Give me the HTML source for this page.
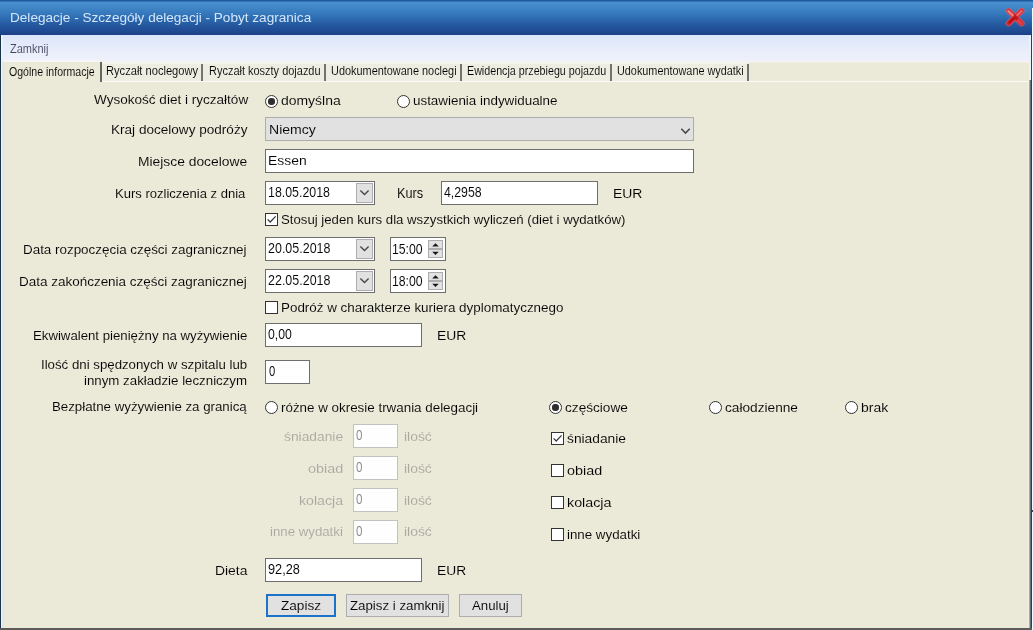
<!DOCTYPE html>
<html><head><meta charset="utf-8"><title>Delegacje</title>
<style>
html,body{margin:0;padding:0;}
body{width:1033px;height:630px;overflow:hidden;background:#ece9d8;font-family:"Liberation Sans",sans-serif;}
#win{position:relative;width:1033px;height:630px;overflow:hidden;background:#ebe9d8;}
.t{position:absolute;white-space:pre;line-height:20px;height:20px;transform-origin:0 0;font-family:"Liberation Sans",sans-serif;}
.a{position:absolute;box-sizing:border-box;}
#title{left:0;top:0;width:1033px;height:35px;background:linear-gradient(#1d5a9c 0px,#1f5c9f 1px,#4a90d1 2.2px,#3f86c6 8px,#3172b6 16px,#265ba2 24px,#1f4a91 31px,#1c4086 35px);}
#menu{left:2px;top:35px;width:1027px;height:25.5px;background:linear-gradient(#dce6fa,#e6ecfa 50%,#eff2fb);}
#tabs{left:102px;top:60.5px;width:646px;height:20.5px;background:linear-gradient(#f5f5f0 0px,#f3f3ec 2.5px,#eeede1 3.5px,#eeede1 100%);}
#tabs2{left:748px;top:60.5px;width:281px;height:2.5px;background:linear-gradient(#f3f4f2,#efeee4);}
.sep{position:absolute;top:64px;width:2px;height:17px;background:#737370;}
#tabline{left:102px;top:81px;width:927px;height:1px;background:#fbfbf7;}
#acttab{left:3px;top:60px;width:97px;height:2.3px;background:linear-gradient(#f3f5fa,#f8f8f4);}
.inp{background:#fff;border:1px solid #6e6e6e;}
.inpd{background:#fefefe;border:1px solid #c2c2be;}
.combo{background:#e1e1e1;border:1px solid #adadad;}
.dbtn{background:#e1e1e1;border:1px solid #adadad;}
.radio{width:13px;height:13px;border-radius:50%;border:1px solid #333;background:#fff;}
.radio.on::after{content:"";position:absolute;left:2.3px;top:2.3px;width:6.4px;height:6.4px;border-radius:50%;background:#2e2e2e;}
.cb{width:13px;height:13px;border:1px solid #333;background:#fff;}
.btn{background:#e1e1e1;border:1px solid #adadad;}
.btn.def{border:2px solid #1a72c9;}

</style></head>
<body>
<div id="win">
<div class="a" id="title"></div>
<div class="a" id="menu"></div>
<div class="a" id="tabs"></div>
<div class="a" id="tabs2"></div>
<div class="a" id="acttab"></div>
<div class="sep" style="left:100px;top:62px;height:20px;background:#666663"></div>
<div class="sep" style="left:201.3px"></div>
<div class="sep" style="left:324px"></div>
<div class="sep" style="left:460px"></div>
<div class="sep" style="left:610px"></div>
<div class="sep" style="left:747.2px"></div>
<div class="a" id="tabline"></div>
<!-- edges -->
<div class="a" style="left:0;top:35px;width:1px;height:595px;background:#1b3347"></div>
<div class="a" style="left:1px;top:35px;width:1px;height:595px;background:#ecf7ff"></div>
<div class="a" style="left:2px;top:35px;width:1px;height:27px;background:#e9effb"></div>
<div class="a" style="left:2px;top:62px;width:1px;height:568px;background:#dfe5e8"></div>
<div class="a" style="left:3px;top:62px;width:1px;height:566px;background:#e7e5db"></div>
<div class="a" style="left:1029px;top:35px;width:2px;height:45px;background:#eaf1fa"></div>
<div class="a" style="left:1027px;top:82px;width:2px;height:546px;background:#efecdc"></div>
<div class="a" style="left:1029px;top:80px;width:1px;height:550px;background:#a4acb0"></div>
<div class="a" style="left:1030px;top:80px;width:1px;height:550px;background:#5f6e7a"></div>
<div class="a" style="left:1031px;top:35px;width:1px;height:595px;background:#2e4050"></div>
<div class="a" style="left:1032px;top:8px;width:1px;height:622px;background:#f4fbff"></div>
<div class="a" style="left:0;top:628px;width:1032px;height:2px;background:#5c5c58"></div>
<div class="a" style="left:1032px;top:510px;width:1px;height:2px;background:#39424f"></div>
<!-- close X -->
<svg class="a" style="left:1001px;top:3px" width="28" height="28" viewBox="-2 -2 28 28">
<defs><filter id="bl" x="-20%" y="-20%" width="140%" height="140%"><feGaussianBlur stdDeviation="0.55"/></filter></defs>
<g fill="none" stroke-linecap="round" filter="url(#bl)">
<path d="M5.6 5.8 L18.6 18.4 M18.6 5.8 L5.6 18.4" stroke="#e0606a" stroke-width="6" opacity="0.75"/>
<path d="M5.6 5.8 L18.6 18.4 M18.6 5.8 L5.6 18.4" stroke="#d8272d" stroke-width="4.3"/>
<path d="M6.3 17.6 L11.5 12.6" stroke="#b80c14" stroke-width="2.2"/>
<path d="M10.8 11 L13.4 13.4" stroke="#c2141a" stroke-width="3"/>
<path d="M5.4 6.2 L9.8 10.4" stroke="#ef8d90" stroke-width="2.4" opacity="0.85"/>
<path d="M18.6 6.0 L14.4 10" stroke="#ea7a80" stroke-width="2.2" opacity="0.8"/>
<path d="M15 15.4 L18.4 18.6" stroke="#e24a50" stroke-width="2.4" opacity="0.8"/>
</g>
</svg>

<!-- row1 radios -->
<div class="a radio on" style="left:265px;top:95px"></div>
<div class="a radio" style="left:397px;top:95px"></div>
<!-- combo -->
<div class="a combo" style="left:265px;top:117px;width:429px;height:24px"></div>
<svg class="a chev" style="left:679.6px;top:126.6px" width="11" height="9" viewBox="0 0 11 9"><path d="M1.3 1.8 L5.5 6.1 L9.7 1.8" fill="none" stroke="#484848" stroke-width="1.55"/></svg>
<!-- miejsce -->
<div class="a inp" style="left:265px;top:149px;width:429px;height:24px"></div>
<!-- kurs date -->
<div class="a inp" style="left:265px;top:181px;width:110px;height:24px"></div>
<div class="a dbtn" style="left:356px;top:183px;width:17px;height:20px"></div>
<svg class="a chev" style="left:358.7px;top:189.2px" width="11" height="8" viewBox="0 0 11 8"><path d="M1.4 1.6 L5.5 5.6 L9.6 1.6" fill="none" stroke="#484848" stroke-width="1.35"/></svg>
<div class="a inp" style="left:441px;top:181px;width:157px;height:24px"></div>
<!-- cb stosuj -->
<div class="a cb" style="left:265px;top:213px"></div>
<svg class="a" style="left:266px;top:214px" width="11" height="11" viewBox="0 0 11 11"><path d="M1.6 5.4 L4.2 8 L9.6 2.4" fill="none" stroke="#3a3a3a" stroke-width="1.25"/></svg>
<!-- date start -->
<div class="a inp" style="left:265px;top:237px;width:110px;height:24px"></div>
<div class="a dbtn" style="left:356px;top:239px;width:17px;height:20px"></div>
<svg class="a chev" style="left:358.7px;top:245.2px" width="11" height="8" viewBox="0 0 11 8"><path d="M1.4 1.6 L5.5 5.6 L9.6 1.6" fill="none" stroke="#484848" stroke-width="1.35"/></svg>
<div class="a inp" style="left:390px;top:237px;width:56px;height:24px"></div>
<div class="a dbtn" style="left:428px;top:240px;width:15px;height:9px"></div>
<div class="a dbtn" style="left:428px;top:249px;width:15px;height:9px"></div>
<svg class="a" style="left:431px;top:242px" width="9" height="14" viewBox="0 0 9 14"><path d="M1.2 4.4 L4.5 1.3 L7.8 4.4Z M1.2 9.8 L4.5 12.9 L7.8 9.8Z" fill="#1a1a1a"/></svg>
<!-- date end -->
<div class="a inp" style="left:265px;top:269px;width:110px;height:24px"></div>
<div class="a dbtn" style="left:356px;top:271px;width:17px;height:20px"></div>
<svg class="a chev" style="left:358.7px;top:277.2px" width="11" height="8" viewBox="0 0 11 8"><path d="M1.4 1.6 L5.5 5.6 L9.6 1.6" fill="none" stroke="#484848" stroke-width="1.35"/></svg>
<div class="a inp" style="left:390px;top:269px;width:56px;height:24px"></div>
<div class="a dbtn" style="left:428px;top:272px;width:15px;height:9px"></div>
<div class="a dbtn" style="left:428px;top:281px;width:15px;height:9px"></div>
<svg class="a" style="left:431px;top:274px" width="9" height="14" viewBox="0 0 9 14"><path d="M1.2 4.4 L4.5 1.3 L7.8 4.4Z M1.2 9.8 L4.5 12.9 L7.8 9.8Z" fill="#1a1a1a"/></svg>
<!-- cb podroz -->
<div class="a cb" style="left:265px;top:301px"></div>
<!-- ekwiwalent -->
<div class="a inp" style="left:265px;top:323px;width:157px;height:24px"></div>
<!-- ilosc dni -->
<div class="a inp" style="left:265px;top:360px;width:45px;height:24px"></div>
<!-- radios row -->
<div class="a radio" style="left:265px;top:401px"></div>
<div class="a radio on" style="left:549px;top:401px"></div>
<div class="a radio" style="left:709px;top:401px"></div>
<div class="a radio" style="left:845px;top:401px"></div>
<!-- disabled inputs -->
<div class="a inpd" style="left:353px;top:424px;width:45px;height:24px"></div>
<div class="a inpd" style="left:353px;top:456px;width:45px;height:24px"></div>
<div class="a inpd" style="left:353px;top:488px;width:45px;height:24px"></div>
<div class="a inpd" style="left:353px;top:520px;width:45px;height:24px"></div>
<!-- checkboxes right -->
<div class="a cb" style="left:551px;top:432px"></div>
<svg class="a" style="left:552px;top:433px" width="11" height="11" viewBox="0 0 11 11"><path d="M1.6 5.4 L4.2 8 L9.6 2.4" fill="none" stroke="#3a3a3a" stroke-width="1.25"/></svg>
<div class="a cb" style="left:551px;top:464px"></div>
<div class="a cb" style="left:551px;top:496px"></div>
<div class="a cb" style="left:551px;top:528px"></div>
<!-- dieta -->
<div class="a inp" style="left:265px;top:558px;width:157px;height:24px"></div>
<!-- buttons -->
<div class="a btn def" style="left:266px;top:594px;width:70px;height:23px"></div>
<div class="a btn" style="left:346px;top:594px;width:103px;height:23px"></div>
<div class="a btn" style="left:459px;top:594px;width:63px;height:23px"></div>

<span class="t" style="left:10.1px;top:7.8px;font-size:13.2px;color:#d3e6fa;transform:scaleX(1.0298);">Delegacje - Szczegóły delegacji - Pobyt zagranica</span>
<span class="t" style="left:9.5px;top:38.9px;font-size:12.3px;color:#43465f;transform:scaleX(0.8945);-webkit-text-stroke:0.07px #e8edfa;">Zamknij</span>
<span class="t" style="left:9.2px;top:61.9px;font-size:12px;color:#000;transform:scaleX(0.8798);-webkit-text-stroke:0.07px #ebe9d8;">Ogólne informacje</span>
<span class="t" style="left:106.0px;top:60.5px;font-size:12px;color:#000;transform:scaleX(0.9266);-webkit-text-stroke:0.07px #efeee2;">Ryczałt noclegowy</span>
<span class="t" style="left:209.0px;top:60.5px;font-size:12px;color:#000;transform:scaleX(0.9141);-webkit-text-stroke:0.07px #efeee2;">Ryczałt koszty dojazdu</span>
<span class="t" style="left:331.0px;top:60.5px;font-size:12px;color:#000;transform:scaleX(0.9094);-webkit-text-stroke:0.07px #efeee2;">Udokumentowane noclegi</span>
<span class="t" style="left:466.8px;top:60.5px;font-size:12px;color:#000;transform:scaleX(0.8922);-webkit-text-stroke:0.07px #efeee2;">Ewidencja przebiegu pojazdu</span>
<span class="t" style="left:617.2px;top:60.5px;font-size:12px;color:#000;transform:scaleX(0.9044);-webkit-text-stroke:0.07px #efeee2;">Udokumentowane wydatki</span>
<span class="t" style="left:93.6px;top:89.8px;font-size:13px;color:#000;transform:scaleX(1.0418);-webkit-text-stroke:0.07px #ebe9d8;">Wysokość diet i ryczałtów</span>
<span class="t" style="left:111.1px;top:120.2px;font-size:13px;color:#000;transform:scaleX(1.0434);-webkit-text-stroke:0.07px #ebe9d8;">Kraj docelowy podróży</span>
<span class="t" style="left:138.0px;top:152.2px;font-size:13px;color:#000;transform:scaleX(1.0639);-webkit-text-stroke:0.07px #ebe9d8;">Miejsce docelowe</span>
<span class="t" style="left:114.9px;top:183.9px;font-size:13px;color:#000;transform:scaleX(1.0024);-webkit-text-stroke:0.07px #ebe9d8;">Kurs rozliczenia z dnia</span>
<span class="t" style="left:23.0px;top:239.8px;font-size:13px;color:#000;transform:scaleX(1.0313);-webkit-text-stroke:0.07px #ebe9d8;">Data rozpoczęcia części zagranicznej</span>
<span class="t" style="left:18.9px;top:271.7px;font-size:13px;color:#000;transform:scaleX(1.0364);-webkit-text-stroke:0.07px #ebe9d8;">Data zakończenia części zagranicznej</span>
<span class="t" style="left:32.7px;top:326.0px;font-size:13px;color:#000;transform:scaleX(1.0155);-webkit-text-stroke:0.07px #ebe9d8;">Ekwiwalent pieniężny na wyżywienie</span>
<span class="t" style="left:40.8px;top:355.0px;font-size:13px;color:#000;transform:scaleX(1.0189);-webkit-text-stroke:0.07px #ebe9d8;">Ilość dni spędzonych w szpitalu lub</span>
<span class="t" style="left:83.9px;top:370.8px;font-size:13px;color:#000;transform:scaleX(1.0213);-webkit-text-stroke:0.07px #ebe9d8;">innym zakładzie leczniczym</span>
<span class="t" style="left:52.3px;top:396.6px;font-size:13px;color:#000;transform:scaleX(1.0204);-webkit-text-stroke:0.07px #ebe9d8;">Bezpłatne wyżywienie za granicą</span>
<span class="t" style="left:214.9px;top:560.6px;font-size:13px;color:#000;transform:scaleX(1.0662);-webkit-text-stroke:0.07px #ebe9d8;">Dieta</span>
<span class="t" style="left:280.9px;top:91.4px;font-size:13px;color:#000;transform:scaleX(1.0724);-webkit-text-stroke:0.07px #ebe9d8;">domyślna</span>
<span class="t" style="left:412.9px;top:91.4px;font-size:13px;color:#000;transform:scaleX(1.0304);-webkit-text-stroke:0.07px #ebe9d8;">ustawienia indywidualne</span>
<span class="t" style="left:281.1px;top:210.3px;font-size:13px;color:#000;transform:scaleX(1.0144);-webkit-text-stroke:0.07px #ebe9d8;">Stosuj jeden kurs dla wszystkich wyliczeń (diet i wydatków)</span>
<span class="t" style="left:281.1px;top:297.7px;font-size:13px;color:#000;transform:scaleX(1.0314);-webkit-text-stroke:0.07px #ebe9d8;">Podróż w charakterze kuriera dyplomatycznego</span>
<span class="t" style="left:281.1px;top:397.8px;font-size:13px;color:#000;transform:scaleX(1.0292);-webkit-text-stroke:0.07px #ebe9d8;">różne w okresie trwania delegacji</span>
<span class="t" style="left:565.1px;top:397.8px;font-size:13px;color:#000;transform:scaleX(1.0484);-webkit-text-stroke:0.07px #ebe9d8;">częściowe</span>
<span class="t" style="left:724.9px;top:397.8px;font-size:13px;color:#000;transform:scaleX(1.0516);-webkit-text-stroke:0.07px #ebe9d8;">całodzienne</span>
<span class="t" style="left:860.9px;top:397.8px;font-size:13px;color:#000;transform:scaleX(1.0740);-webkit-text-stroke:0.07px #ebe9d8;">brak</span>
<span class="t" style="left:566.8px;top:428.6px;font-size:13px;color:#000;transform:scaleX(1.0595);-webkit-text-stroke:0.07px #ebe9d8;">śniadanie</span>
<span class="t" style="left:566.8px;top:460.8px;font-size:13px;color:#000;transform:scaleX(1.1055);-webkit-text-stroke:0.07px #ebe9d8;">obiad</span>
<span class="t" style="left:566.8px;top:492.9px;font-size:13px;color:#000;transform:scaleX(1.0989);-webkit-text-stroke:0.07px #ebe9d8;">kolacja</span>
<span class="t" style="left:566.8px;top:525.0px;font-size:13px;color:#000;transform:scaleX(1.0241);-webkit-text-stroke:0.07px #ebe9d8;">inne wydatki</span>
<span class="t" style="left:268.7px;top:119.8px;font-size:13px;color:#000;transform:scaleX(1.0814);-webkit-text-stroke:0.07px #e1e1e1;">Niemcy</span>
<span class="t" style="left:267.9px;top:150.8px;font-size:13px;color:#000;transform:scaleX(1.0700);-webkit-text-stroke:0.07px #fff;">Essen</span>
<span class="t" style="left:268.2px;top:181.8px;font-size:14px;color:#000;transform:scaleX(0.8842);-webkit-text-stroke:0.07px #fff;">18.05.2018</span>
<span class="t" style="left:396.8px;top:182.6px;font-size:14px;color:#000;transform:scaleX(0.9119);-webkit-text-stroke:0.07px #ebe9d8;">Kurs</span>
<span class="t" style="left:444.2px;top:181.8px;font-size:14px;color:#000;transform:scaleX(0.8793);-webkit-text-stroke:0.07px #fff;">4,2958</span>
<span class="t" style="left:613.0px;top:184.0px;font-size:13.6px;color:#000;transform:scaleX(1.0251);-webkit-text-stroke:0.07px #ebe9d8;">EUR</span>
<span class="t" style="left:267.7px;top:237.9px;font-size:14px;color:#000;transform:scaleX(0.8913);-webkit-text-stroke:0.07px #fff;">20.05.2018</span>
<span class="t" style="left:392.4px;top:238.7px;font-size:14px;color:#000;transform:scaleX(0.8748);-webkit-text-stroke:0.07px #fff;">15:00</span>
<span class="t" style="left:267.7px;top:269.8px;font-size:14px;color:#000;transform:scaleX(0.8913);-webkit-text-stroke:0.07px #fff;">22.05.2018</span>
<span class="t" style="left:392.4px;top:270.7px;font-size:14px;color:#000;transform:scaleX(0.8748);-webkit-text-stroke:0.07px #fff;">18:00</span>
<span class="t" style="left:268.2px;top:323.8px;font-size:14px;color:#000;transform:scaleX(0.8756);-webkit-text-stroke:0.07px #fff;">0,00</span>
<span class="t" style="left:437.0px;top:326.0px;font-size:13.6px;color:#000;transform:scaleX(1.0216);-webkit-text-stroke:0.07px #ebe9d8;">EUR</span>
<span class="t" style="left:268.7px;top:361.0px;font-size:14px;color:#000;transform:scaleX(0.8029);-webkit-text-stroke:0.07px #fff;">0</span>
<span class="t" style="left:267.5px;top:559.2px;font-size:14px;color:#000;transform:scaleX(0.9091);-webkit-text-stroke:0.07px #fff;">92,28</span>
<span class="t" style="left:437.1px;top:560.9px;font-size:13.6px;color:#000;transform:scaleX(1.0147);-webkit-text-stroke:0.07px #ebe9d8;">EUR</span>
<span class="t" style="left:283.9px;top:426.5px;font-size:13px;color:#a9a9a2;transform:scaleX(1.0613);-webkit-text-stroke:0.07px #ebe9d8;">śniadanie</span>
<span class="t" style="left:307.7px;top:458.7px;font-size:13px;color:#a9a9a2;transform:scaleX(1.1087);-webkit-text-stroke:0.07px #ebe9d8;">obiad</span>
<span class="t" style="left:298.9px;top:490.6px;font-size:13px;color:#a9a9a2;transform:scaleX(1.0890);-webkit-text-stroke:0.07px #ebe9d8;">kolacja</span>
<span class="t" style="left:270.1px;top:522.4px;font-size:13px;color:#a9a9a2;transform:scaleX(1.0185);-webkit-text-stroke:0.07px #ebe9d8;">inne wydatki</span>
<span class="t" style="left:356.4px;top:424.8px;font-size:14px;color:#858585;transform:scaleX(0.8285);-webkit-text-stroke:0.07px #fff;">0</span>
<span class="t" style="left:356.4px;top:456.8px;font-size:14px;color:#858585;transform:scaleX(0.8285);-webkit-text-stroke:0.07px #fff;">0</span>
<span class="t" style="left:356.4px;top:488.8px;font-size:14px;color:#858585;transform:scaleX(0.8285);-webkit-text-stroke:0.07px #fff;">0</span>
<span class="t" style="left:356.4px;top:520.8px;font-size:14px;color:#858585;transform:scaleX(0.8285);-webkit-text-stroke:0.07px #fff;">0</span>
<span class="t" style="left:404.2px;top:426.5px;font-size:13px;color:#a9a9a2;transform:scaleX(1.0674);-webkit-text-stroke:0.07px #ebe9d8;">ilość</span>
<span class="t" style="left:404.2px;top:458.7px;font-size:13px;color:#a9a9a2;transform:scaleX(1.0674);-webkit-text-stroke:0.07px #ebe9d8;">ilość</span>
<span class="t" style="left:404.2px;top:490.6px;font-size:13px;color:#a9a9a2;transform:scaleX(1.0674);-webkit-text-stroke:0.07px #ebe9d8;">ilość</span>
<span class="t" style="left:404.2px;top:522.4px;font-size:13px;color:#a9a9a2;transform:scaleX(1.0674);-webkit-text-stroke:0.07px #ebe9d8;">ilość</span>
<span class="t" style="left:280.7px;top:595.5px;font-size:13px;color:#000;transform:scaleX(1.0437);-webkit-text-stroke:0.07px #e1e1e1;">Zapisz</span>
<span class="t" style="left:349.8px;top:595.5px;font-size:13px;color:#000;transform:scaleX(1.0206);-webkit-text-stroke:0.07px #e1e1e1;">Zapisz i zamknij</span>
<span class="t" style="left:471.6px;top:595.5px;font-size:13px;color:#000;transform:scaleX(1.0174);-webkit-text-stroke:0.07px #e1e1e1;">Anuluj</span>
</div>
</body></html>
